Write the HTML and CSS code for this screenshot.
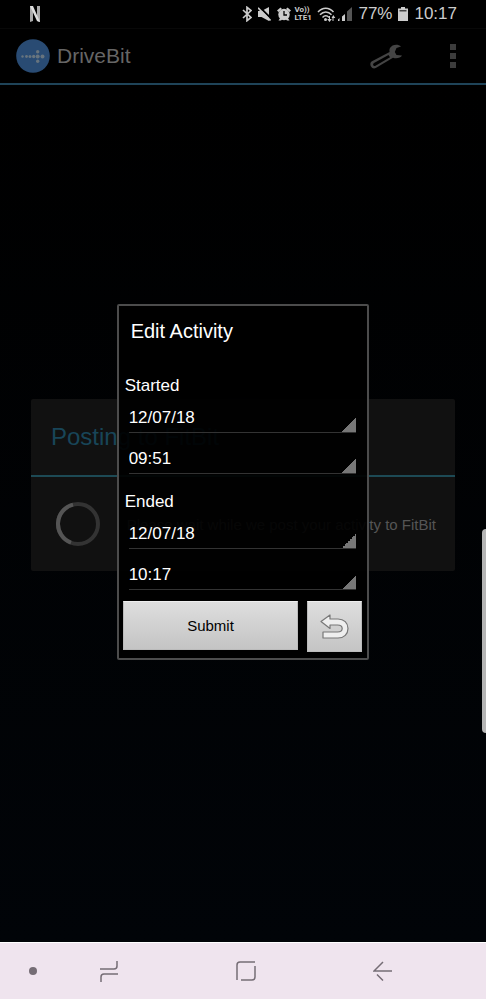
FILE: index.html
```
<!DOCTYPE html>
<html lang="en">

<head>
  <meta charset="UTF-8">
  <meta name="viewport" content="width=device-width, initial-scale=1.0">
  <title>DriveBit</title>
  <link rel="stylesheet" href="styles.css">
</head>

<body>
  <div class="status">
    <svg class="netflix" width="10" height="16" viewBox="0 0 10 16">
      <path d="M0 0h3v15l-3 1zM7 0h3v16l-3-1z" fill="#aaa" />
      <path d="M0 0h3l7 16-3-1z" fill="#ddd" />
    </svg>
    <svg class="bluetooth" width="10" height="16" viewBox="0 0 10 16" fill="none" stroke="#ccc" stroke-width="1.700">
      <path d="M1 4l8 7.500-4 3.200V1.300L9 4.500 1 12" />
    </svg>
    <svg class="mute" width="13" height="14" viewBox="0 0 13 14">
      <path d="M0 4h3.500L11 0v14L3.500 10H0z" fill="#ccc" />
      <path d="M1.500 0l12 12" stroke="#000" stroke-width="2" />
      <path d="M0 .8l12.500 12.700" stroke="#ccc" stroke-width="1.700" />
    </svg>
    <svg class="alarm" width="14" height="14" viewBox="0 0 14 14">
      <path d="M0 3.500L3.500.5 5 2 1.500 5zM14 3.500L10.500.5 9 2l3.500 3zM1.500 13.500l2-3 2 1.500-1.500 1.500zM12.500 13.500l-2-3-2 1.500 1.500 1.500z" fill="#ccc" />
      <circle cx="7" cy="7.500" r="5.700" fill="#ccc" />
      <path d="M7 4v4h3" fill="none" stroke="#000" stroke-width="1.300" />
    </svg>
    <span class="volte">Vo))<br>LTE1</span>
    <svg class="wifi" width="19" height="15" viewBox="0 0 19 15" fill="none" stroke="#ccc" stroke-width="1.500">
      <path d="M1 5c4.500-5 11-5 15.500 0M3 7.800c3.400-3.800 8.200-3.800 11.500 0M5.500 10.400c2-2.200 4.600-2.200 6.500 0" />
      <circle cx="8.500" cy="12.500" r="1.500" fill="#ccc" stroke="none" />
      <path d="M13 9v3h1.800L12.500 15l-2.300-3H12V9zM16.500 14v-3h1.800L16.300 8 14.500 11h1v3z" fill="#ccc" stroke="none" />
    </svg>
    <svg class="signal" width="14" height="14" viewBox="0 0 14 14">
      <path d="M9 4.500L14 0v14H9z" fill="#555" />
      <path d="M0 12.500L1.500 11v3H0zM4 9.500L7 7v7H4z" fill="#ccc" />
    </svg>
    <span class="level">77%</span>
    <svg class="battery" width="10" height="14" viewBox="0 0 10 14">
      <path d="M3 0h4v1.500h3V14H0V1.500h3z" fill="#ccc" />
      <path d="M1.500 3h7v1.500h-7z" fill="#444" />
    </svg>
    <span>10:17</span>
  </div>

  <header class="bar">
    <svg class="logo" width="34" height="34" viewBox="0 0 34 34">
      <circle cx="17" cy="17" r="16.800" fill="#294b73" />
      <g fill="#67747e">
        <circle cx="6.500" cy="17.500" r="1.200" />
        <circle cx="10.500" cy="17.500" r="1.400" />
        <circle cx="14" cy="17.500" r="1.500" />
        <circle cx="17.700" cy="17.500" r="1.700" />
        <circle cx="21.700" cy="12.700" r="1.700" />
        <circle cx="21.700" cy="17.500" r="2" />
        <circle cx="21.700" cy="22.300" r="1.700" />
        <circle cx="26.500" cy="17.500" r="2" />
      </g>
    </svg>
    <h1>DriveBit</h1>
    <button class="tool" aria-label="Settings">
      <svg width="33" height="25" viewBox="0 0 33 25">
        <path fill="#444" fill-rule="evenodd" d="M31 2.500C28-.5 22 .3 20 4c-.8 1.600-.6 2.800-.4 4L2 17.300c-2 1.300-2 3.500-1 5.200 1 1.900 3 2.500 4.800 1.500L23 13.800c3.500 1.200 7.700.2 9-2.300l-5.500-.5L24.800 8l1.700-4zM18.500 11l1.500 2.300L5.500 21.800c-1 .5-2-.1-2.300-.9-.3-.8 0-1.500.8-2z" />
      </svg>
    </button>
    <button class="more" aria-label="More options"><i></i><i></i><i></i></button>
  </header>

  <main>
    <div class="dial"></div>
  </main>

  <div class="layer">
    <section class="posting">
      <h2>Posting to FitBit</h2>
      <div class="progress">
        <svg width="44" height="44" viewBox="0 0 44 44" fill="none" stroke-width="4">
          <circle cx="22" cy="22" r="20" stroke="#333" />
          <path d="M15 40.700A20 20 0 0 1 17 2.600" stroke="#555" />
        </svg>
        <p>Please wait while we post your activity to FitBit</p>
      </div>
    </section>
  </div>

  <div class="layer">
    <form class="dialog">
      <h2>Edit Activity</h2>
      <div class="group">
        <label for="start-date">Started</label>
        <select id="start-date">
          <option>12/07/18</option>
        </select>
        <select id="start-time" aria-label="Start time">
          <option>09:51</option>
        </select>
      </div>
      <div class="group">
        <label for="end-date">Ended</label>
        <select id="end-date">
          <option>12/07/18</option>
        </select>
        <select id="end-time" aria-label="End time">
          <option>10:17</option>
        </select>
      </div>
      <div class="actions">
        <button type="button" class="submit">Submit</button>
        <button type="button" class="back" aria-label="Back">
          <svg width="29" height="26" viewBox="0 0 29 26">
            <path d="M1 7.500L10 1v4h8c6 0 10 4 10 9.500S24 24 18 24H3v-6h14.500c3 0 4.700-1.300 4.700-3.500S20.500 11 17.500 11H10v3.500z" fill="#eee" stroke="#777" stroke-width="1.200" stroke-linejoin="round" />
          </svg>
        </button>
      </div>
    </form>
  </div>

  <div class="edge"></div>

  <nav>
    <button class="dot" aria-label="Hide bar"><i></i></button>
    <button aria-label="Recents">
      <svg width="20" height="22" viewBox="0 0 20 22">
        <path d="M1 9h14q3 0 3-3V1M19 14H5q-3 0-3 3v5" />
      </svg>
    </button>
    <button aria-label="Home">
      <svg width="20" height="20" viewBox="0 0 20 20">
        <path d="M19 1H4Q1 1 1 4v15M5 19h11q3 0 3-3V5" />
      </svg>
    </button>
    <button aria-label="Back">
      <svg width="20" height="20" viewBox="0 0 20 20">
        <path d="M10 1L1 10h18M4 13.500l6 6" />
      </svg>
    </button>
  </nav>
</body>

</html>
```

FILE: styles.css
```
* {
  box-sizing: border-box;
}

body {
  margin: 0;
  min-height: 100vh;
  display: flex;
  flex-direction: column;
  position: relative;
  background: #000;
  color: #fff;
  font-family: "Liberation Sans", Arial, sans-serif;
}

h1,
h2,
p {
  margin: 0;
  font-weight: normal;
}

button {
  border: none;
  padding: 0;
  background: none;
  font-family: inherit;
  cursor: pointer;
}

svg {
  display: block;
  flex: none;
}

/* status bar */
.status {
  height: 29px;
  padding: 0 29px 0 30px;
  display: flex;
  align-items: center;
  gap: 6px;
  color: #ccc;
  font-size: 17px;
  border-bottom: 1px solid #080808;
}

.status .netflix {
  margin-right: auto;
}

.status .volte {
  width: 18px;
  margin: 0 -1px 0 -3px;
  font: bold 8px/8px Roboto, sans-serif;
}

.status .signal {
  margin-left: -4px;
}

/* action bar */
.bar {
  height: 56px;
  padding: 0 28px 0 16px;
  display: flex;
  align-items: center;
  border-bottom: 2px solid #1f4459;
}

.bar h1 {
  margin-left: 7px;
  color: #666;
  font-size: 21px;
}

.bar .tool {
  margin-left: auto;
}

.bar .more {
  width: 10px;
  margin-left: 45px;
  display: grid;
  justify-items: center;
  gap: 3px;
}

.bar .more i {
  width: 6px;
  height: 6px;
  background: #3c3c3c;
}

main {
  flex: 1;
  display: grid;
  place-items: center;
  background: linear-gradient(#000, #010408);
}

.dial {
  width: 234px;
  height: 234px;
  border: 2px solid #0b0c0e;
  border-radius: 50%;
}

/* windows stacked over the page */
.layer {
  position: absolute;
  inset: 28px 0 57px;
  display: grid;
  place-items: center;
}

.posting {
  width: calc(100% - 62px);
  background: #111;
  border-radius: 2px;
}

.posting h2 {
  padding: 0 20px;
  color: #184558;
  font-size: 24px;
  line-height: 76px;
  border-bottom: 2px solid #1d4a55;
}

.progress {
  height: 94px;
  padding: 0 19px 0 25px;
  display: flex;
  align-items: center;
  justify-content: space-between;
}

.progress p {
  color: #555;
  font-size: 15px;
  white-space: nowrap;
}

.dialog {
  width: 52%;
  min-width: 252px;
  margin-bottom: 6px;
  padding: 0 5px 6px 4px;
  background: rgba(0, 0, 0, 0.92);
  border: 2px solid #4c4c4c;
  border-radius: 2px;
}

.dialog h2 {
  padding-left: 8px;
  margin-bottom: 20px;
  font-size: 20px;
  line-height: 50px;
}

.group {
  display: flex;
  flex-direction: column;
  gap: 11px;
  padding: 0 6px;
  margin-bottom: 18px;
}

.group label {
  margin: 0 0 -4px -4px;
  font-size: 17px;
  line-height: 20px;
}

.group select {
  appearance: none;
  height: 30px;
  padding: 0;
  border: none;
  border-bottom: 1px solid #333;
  border-radius: 0;
  color: #fff;
  font-family: inherit;
  font-size: 17px;
  background: linear-gradient(135deg, transparent 50%, #777 50%) no-repeat right bottom / 14px 14px;
}

.actions {
  display: flex;
  align-items: flex-start;
  gap: 9px;
  margin-top: -7px;
}

.actions button {
  background: linear-gradient(#dedede, #c4c4c4);
  border: 1px solid #bbb;
  border-top-color: #eee;
}

.actions .submit {
  flex: 1;
  height: 49px;
  color: #000;
  font-size: 15px;
}

.actions .back {
  width: 55px;
  height: 51px;
  display: grid;
  place-items: center;
}

/* edge panel handle */
.edge {
  position: absolute;
  top: 53%;
  right: 0;
  width: 4px;
  height: 204px;
  background: #b5b5b5;
  border-radius: 4px 0 0 4px;
}

nav {
  height: 57px;
  padding-left: 29px;
  display: flex;
  align-items: center;
  background: #efe4ee;
  border-top: 1px solid #fff;
}

nav button {
  flex: 0 0 30%;
  display: flex;
}

nav .dot {
  flex-basis: 70px;
}

nav button:last-child {
  flex: 1;
}

nav .dot i {
  width: 8px;
  height: 8px;
  background: #756d75;
  border-radius: 50%;
}

nav svg {
  fill: none;
  stroke: #756d75;
  stroke-width: 1.5;
}
```
